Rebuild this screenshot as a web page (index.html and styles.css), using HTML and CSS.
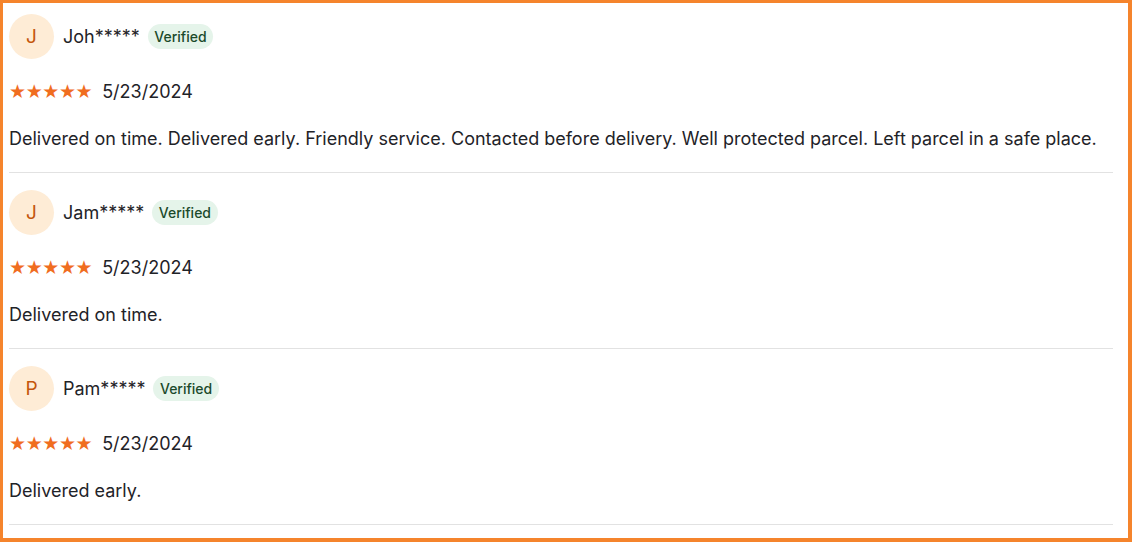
FILE: index.html
```html
<!DOCTYPE html>
<html>
<head>
<meta charset="utf-8">
<link rel="stylesheet" href="styles.css">
</head>
<body>
<div class="frame">
  <div class="review">
    <div class="head">
      <div class="avatar">J</div>
      <span class="name">Joh*****</span>
      <span class="badge">Verified</span>
    </div>
    <div class="meta">
      <span class="stars">★★★★★</span>
      <span class="date">5/23/2024</span>
    </div>
    <p class="text">Delivered on time. Delivered early. Friendly service. Contacted before delivery. Well protected parcel. Left parcel in a safe place.</p>
  </div>
  <div class="review">
    <div class="head">
      <div class="avatar">J</div>
      <span class="name">Jam*****</span>
      <span class="badge">Verified</span>
    </div>
    <div class="meta">
      <span class="stars">★★★★★</span>
      <span class="date">5/23/2024</span>
    </div>
    <p class="text">Delivered on time.</p>
  </div>
  <div class="review">
    <div class="head">
      <div class="avatar">P</div>
      <span class="name">Pam*****</span>
      <span class="badge">Verified</span>
    </div>
    <div class="meta">
      <span class="stars">★★★★★</span>
      <span class="date">5/23/2024</span>
    </div>
    <p class="text">Delivered early.</p>
  </div>
</div>
</body>
</html>
```
FILE: styles.css
```css
html, body {
  margin: 0;
  padding: 0;
  background: #ffffff;
}
body {
  font-family: Inter, "Noto Sans", sans-serif;
  color: #1f2328;
}
.frame {
  box-sizing: border-box;
  width: 1132px;
  height: 542px;
  border-style: solid;
  border-color: #f5842c;
  border-width: 3px 4px 4px 3px;
  padding: 0 15px 0 6px;
  overflow: hidden;
}
.review {
  padding: 17px 0 21px;
  border-bottom: 1px solid #e2e2e2;
}
.review:first-child {
  padding-top: 11px;
}
.head {
  display: flex;
  align-items: center;
  height: 45px;
}
.avatar {
  width: 45px;
  height: 45px;
  border-radius: 50%;
  background: #feecd6;
  color: #c4560c;
  font-size: 19px;
  display: flex;
  align-items: center;
  justify-content: center;
  margin-right: 9px;
}
.name {
  font-size: 18px;
  margin-right: 8px;
}
.badge {
  background: #e5f4ea;
  color: #1b4a2b;
  font-size: 14px;
  font-weight: 500;
  height: 25px;
  line-height: 25px;
  padding: 0 6.5px;
  border-radius: 13px;
}
.meta {
  display: flex;
  align-items: center;
  height: 24px;
  margin-top: 20px;
}
.stars {
  color: #f06d1f;
  font-size: 19px;
  letter-spacing: -0.4px;
  margin-right: 10px;
  font-family: "DejaVu Sans", sans-serif;
}
.date {
  font-size: 18px;
}
.text {
  margin: 24px 0 0;
  font-size: 18px;
  line-height: 24px;
}
```
